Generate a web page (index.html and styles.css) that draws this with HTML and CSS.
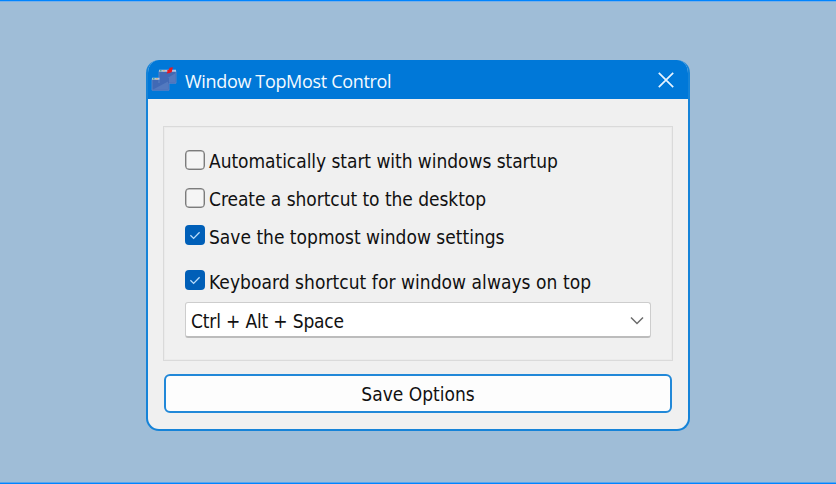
FILE: index.html
```html
<!DOCTYPE html>
<html lang="en">
<head>
<meta charset="utf-8">
<title>Window TopMost Control</title>
<link rel="stylesheet" href="styles.css">
</head>
<body>
<main class="window">
  <header class="titlebar">
    <svg class="app-icon" width="26" height="26" viewBox="0 0 26 26">
      <rect x="8" y="3" width="17" height="13.5" fill="#4169b5"/>
      <path d="M9 15.5l15-9v9z" fill="#5379bf"/>
      <rect x="1" y="11" width="17" height="12.5" fill="#4169b5"/>
      <path d="M2 22.5l15-8v8z" fill="#5379bf"/>
      <path d="M8 16V3.8h17v12.4h-7M1 11.6v11.6h17v-7" fill="none" stroke="#6688c6" stroke-width=".8"/>
      <path d="M8 3.8h17M1 11.8h7.5" stroke="#b3c7e6" stroke-width="2"/>
      <path d="M8.8 3.8h1.7M1.8 11.8h1.7" stroke="#57a98c" stroke-width="1.6"/>
      <path d="M11.8 3.8h2M4.8 11.8h2" stroke="#dcb389" stroke-width="1.6"/>
      <path d="M18.5.8l3.5-.5-.8 2.6-.4 2-2 1.2-3.3.4 1-2-.5-1 2-.9z" fill="#e71922"/>
    </svg>
    <h1 class="title">Window TopMost Control</h1>
    <svg class="close" width="16" height="16" viewBox="0 0 16 16"><path d="M.8.8l14.4 14.4M15.2.8L.8 15.2" stroke="#e6f3ff" stroke-width="1.7"/></svg>
  </header>
  <section class="content">
    <div class="group">
      <label class="option"><span class="box"></span><span class="text auto">Automatically start with windows startup</span></label>
      <label class="option"><span class="box"></span><span class="text create">Create a shortcut to the desktop</span></label>
      <label class="option"><span class="box checked"><svg width="20" height="20" viewBox="0 0 20 20"><path d="M5.4 10.3l3.2 3.1 6-6.2" fill="none" stroke="#b9dcfa" stroke-width="1.3"/></svg></span><span class="text save">Save the topmost window settings</span></label>
      <label class="option hotkey"><span class="box checked"><svg width="20" height="20" viewBox="0 0 20 20"><path d="M5.4 10.3l3.2 3.1 6-6.2" fill="none" stroke="#b9dcfa" stroke-width="1.3"/></svg></span><span class="text key">Keyboard shortcut for window always on top</span></label>
      <div class="select">
        <span class="text combo">Ctrl + Alt + Space</span>
        <svg width="14" height="9" viewBox="0 0 14 9"><path d="M1 1.5l6 6 6-6" fill="none" stroke="#6b6b6b" stroke-width="1.5"/></svg>
      </div>
    </div>
    <button class="button"><span class="text">Save Options</span></button>
  </section>
</main>
</body>
</html>
```
FILE: styles.css
```css
* { box-sizing: border-box; }
body {
  margin: 0;
  height: 484px;
  padding-top: 59px;
  background: #9fbdd7;
  border-top: 1px solid #0085ff;
  border-bottom: 1px solid #0085ff;
  box-shadow: inset 0 1px #78b0e9, inset 0 -1px #5ba4ee;
  overflow: hidden;
}
.window {
  width: 544px;
  height: 371px;
  margin: 0 auto;
  border: 2px solid #1583d8;
  border-top-width: 0;
  border-radius: 13px;
  background: #f0f0f0;
  overflow: hidden;
}
.titlebar {
  height: 39px;
  display: flex;
  align-items: center;
  padding: 0 14px 0 3px;
  background: #0078d8;
}
.app-icon { flex: none; margin-top: 1px; }
.title {
  margin: 2px 0 0 8px;
  font: 400 18px/26px "Open Sans", "Noto Sans", sans-serif;
  letter-spacing: -.33px;
  color: #f4faff;
  white-space: nowrap;
}
.close { margin-left: auto; }
.content { padding: 27px 15px 0; }
.group {
  height: 235px;
  padding: 23px 21px 0;
  border: 1px solid #dadada;
  box-shadow: inset 0 0 0 1px #ebebeb;
}
.option { display: flex; align-items: center; height: 20px; margin-bottom: 18px; }
.option + .option { margin-bottom: 17px; }
.hotkey { margin-top: 25px; }
.option.hotkey { margin-bottom: 12px; }
.box {
  flex: none;
  width: 20px;
  height: 20px;
  border: 1px solid #7c7c7c;
  border-radius: 4px;
  background: #f5f5f5;
  box-shadow: inset 0 0 0 .5px #8e8e8e;
}
.checked { border: 0; background: #005fb8; box-shadow: none; }
.box svg { display: block; }
.text {
  font: 19px/24px "DejaVu Sans Condensed", "DejaVu Sans", sans-serif;
  font-stretch: condensed;
  color: #111;
  white-space: nowrap;
}
.option .text { margin: 2px 0 0 4px; }
.option .auto, .option .create { letter-spacing: -.05px; }
.option .save, .option .key { margin-top: 4px; }
.option .key { letter-spacing: .05px; }
.combo { letter-spacing: -.17px; }
.select {
  width: 466px;
  height: 36px;
  display: flex;
  align-items: center;
  justify-content: space-between;
  padding: 2px 6px 0 5px;
  border: 1px solid #cdcdcd;
  border-bottom: 2px solid #bcbcbc;
  border-radius: 3px;
  background: #fff;
}
.select .combo { margin-top: 1px; }
.button {
  display: block;
  width: 508px;
  height: 39px;
  margin: 13px 0 0 1px;
  padding: 1px 0 0;
  border: 2px solid #2188d8;
  border-radius: 6px;
  background: #fdfdfd;
}
```
